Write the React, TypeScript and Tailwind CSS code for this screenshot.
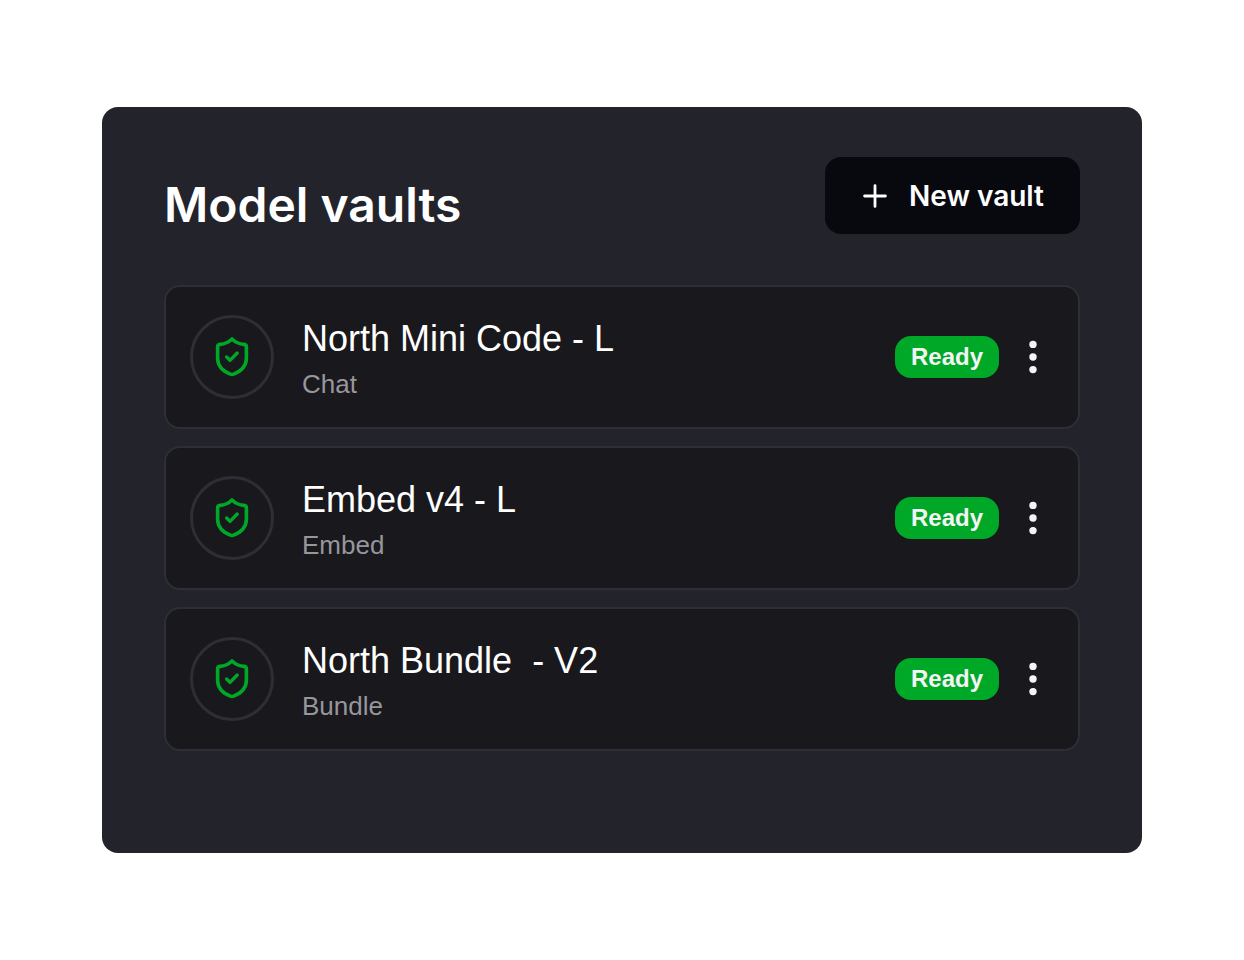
import React from "react";

interface Vault {
  id: string;
  name: string;
  type: string;
  status: string;
}

const VAULTS: Vault[] = [
  { id: "north-mini-code", name: "North Mini Code - L", type: "Chat", status: "Ready" },
  { id: "embed-v4", name: "Embed v4 - L", type: "Embed", status: "Ready" },
  { id: "north-bundle", name: "North Bundle  - V2", type: "Bundle", status: "Ready" },
];

const ShieldIcon = () => (
  <svg
    viewBox="0 0 48 48"
    className="h-12 w-12 text-[#00a828]"
    fill="none"
    stroke="currentColor"
    strokeLinecap="round"
    strokeLinejoin="round"
    aria-hidden="true"
  >
    <path
      d="M24 6 C20.5 9.4 16.6 11 12 11.4 C10.4 11.6 9.6 12.2 9.6 14 V25 C9.6 33 15 38.2 22.4 41.2 C23.6 41.7 24.4 41.7 25.6 41.2 C33 38.2 38.4 33 38.4 25 V14 C38.4 12.2 37.6 11.6 36 11.4 C31.4 11 27.5 9.4 24 6 Z"
      strokeWidth="3.6"
    />
    <path d="M18.6 24 L22 27.4 L29.2 20" strokeWidth="3.4" />
  </svg>
);

const PlusIcon = () => (
  <svg viewBox="0 0 24 24" className="h-6 w-6" stroke="currentColor" strokeWidth="2.8" strokeLinecap="round" aria-hidden="true">
    <path d="M12 1.6 V22.4 M1.6 12 H22.4" />
  </svg>
);

const DotsIcon = () => (
  <svg viewBox="0 0 8 34" className="h-[34px] w-2" fill="currentColor" aria-hidden="true">
    <circle cx="4" cy="4.4" r="3.7" />
    <circle cx="4" cy="17" r="3.7" />
    <circle cx="4" cy="29.6" r="3.7" />
  </svg>
);

const VaultRow: React.FC<{ vault: Vault }> = ({ vault }) => (
  <li className="flex items-center rounded-2xl border-2 border-[#2e2e36] bg-[#19181d] py-[25px] pr-[27px] pl-6">
    <div className="flex h-[84px] w-[84px] shrink-0 items-center justify-center rounded-full border-[3px] border-[#2e2e36]">
      <ShieldIcon />
    </div>
    <div className="ml-7 min-w-0 flex-1">
      <h2 className="text-[36px] leading-[54px] whitespace-pre text-white">{vault.name}</h2>
      <p className="text-[26px] leading-[36px] text-[#97969b]">{vault.type}</p>
    </div>
    <span className="flex h-[42px] items-center rounded-2xl bg-[#00a828] px-4 text-2xl font-bold text-[#f4f4f5]">
      {vault.status}
    </span>
    <button
      type="button"
      aria-label={`Options for ${vault.name}`}
      className="ml-4 flex h-11 w-9 cursor-pointer items-center justify-center text-[#f4f4f5]"
    >
      <DotsIcon />
    </button>
  </li>
);

export default function App() {
  return (
    <main className="flex min-h-screen items-center bg-white px-[102px] font-['Liberation_Sans',Arial,sans-serif]">
      <section className="w-full rounded-2xl bg-[#23232c] px-[62px] pt-[50px] pb-[102px]">
        <header className="flex items-start justify-between">
          <h1 className="pt-4 font-['Inter',sans-serif] text-5xl leading-[64px] font-semibold text-white">Model vaults</h1>
          <button
            type="button"
            className="flex h-[77px] cursor-pointer items-center gap-[22px] rounded-2xl bg-[#08090e] pr-9 pl-[38px] font-['Inter',sans-serif] text-[28px] font-semibold text-white"
          >
            <PlusIcon />
            New vault
          </button>
        </header>
        <ul className="mt-12 flex flex-col gap-[17px]">
          {VAULTS.map((vault) => (
            <VaultRow key={vault.id} vault={vault} />
          ))}
        </ul>
      </section>
    </main>
  );
}
